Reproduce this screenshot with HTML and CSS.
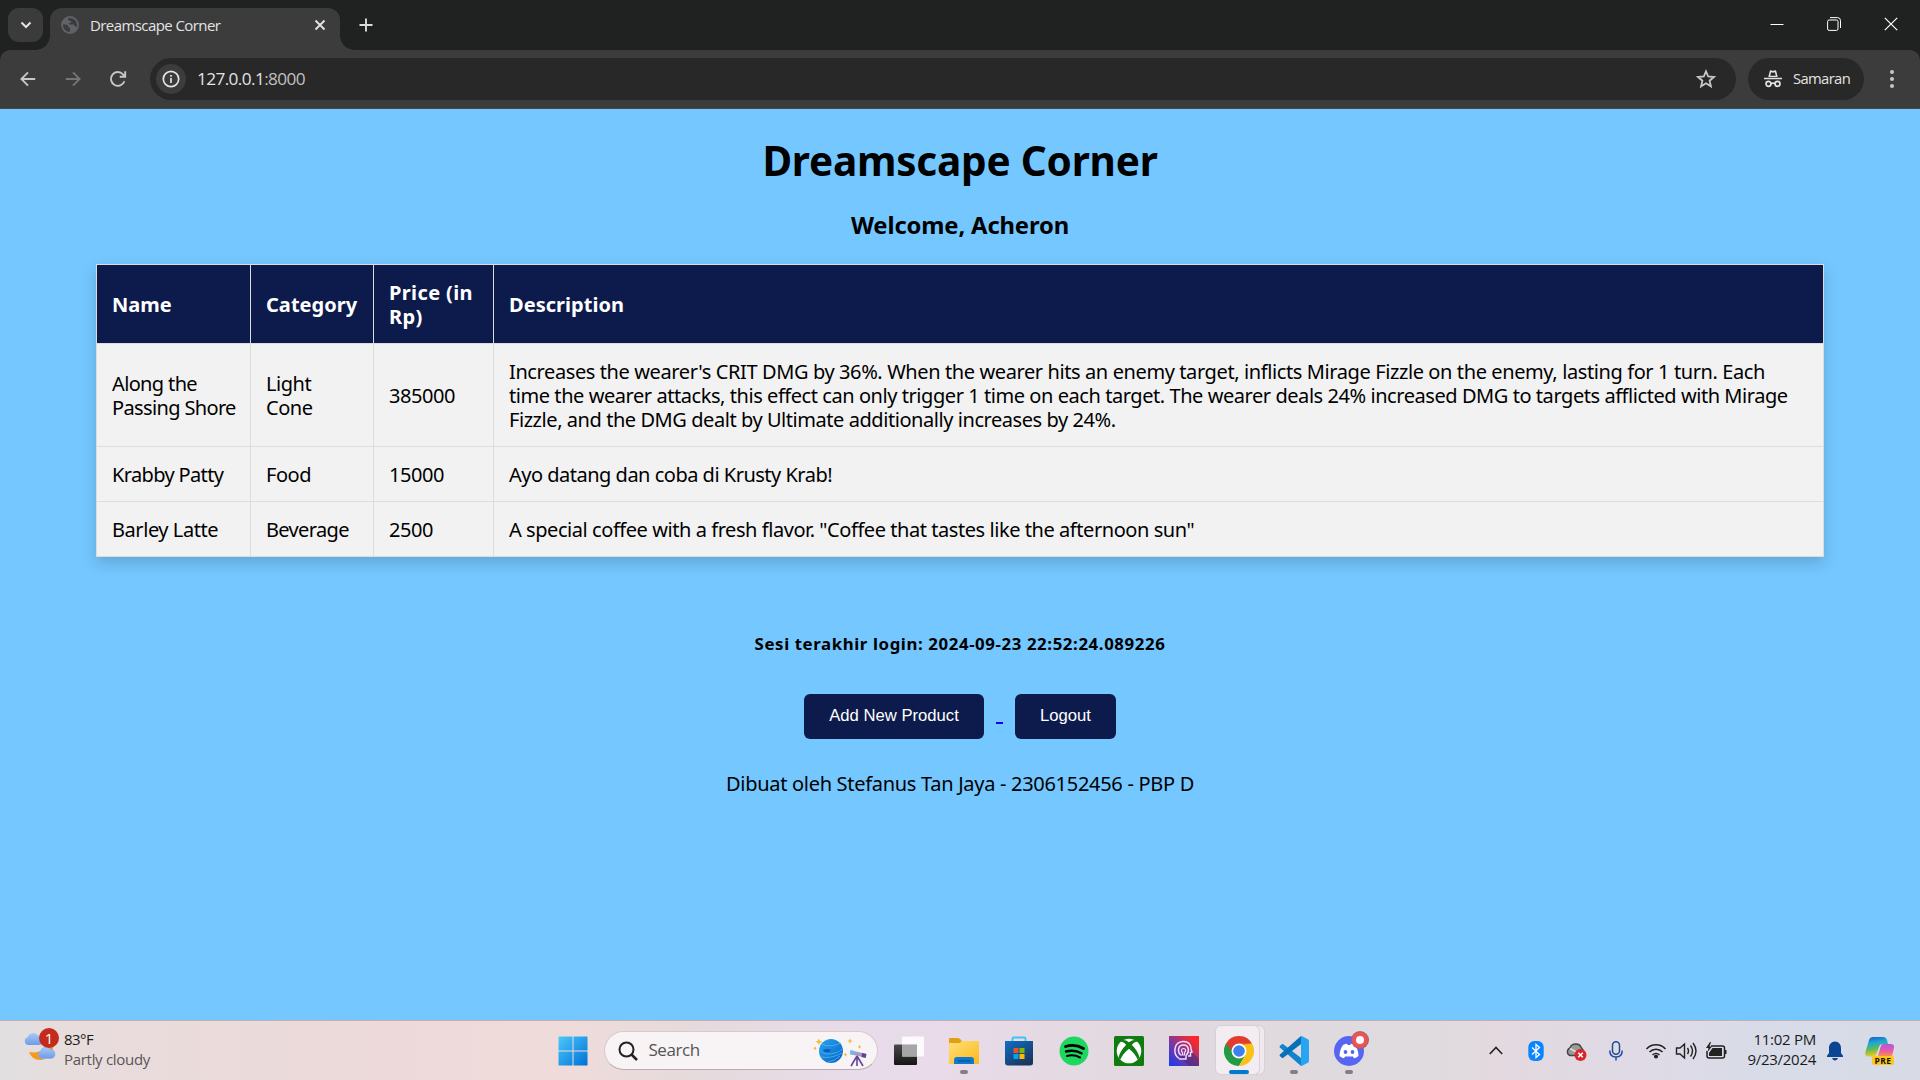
FILE: index.html
```html
<!DOCTYPE html>
<html lang="id">
<head>
<meta charset="utf-8">
<title>Dreamscape Corner</title>
<link rel="stylesheet" href="styles.css">
</head>
<body>
<header class="browser">
  <div class="tabstrip">
    <button class="tabsearch"><svg width="12" height="8" viewBox="0 0 12 8"><path d="M1.500 1.500 6 6l4.500-4.500" fill="none" stroke="#e3e3e3" stroke-width="2"/></svg></button>
    <div class="tab">
      <svg class="globe" width="18" height="18" viewBox="0 0 18 18"><circle cx="9" cy="9" r="8.900" fill="#5f6368"/><path d="M2 8.500c2.500.2 4.800 0 5 1.800.1 1.300 2 .8 2 2.200v3.300C5 16.200 1.800 12.600 2 8.500ZM7 2.200c0 2 .4 2.700 2.400 2.700 1.800 0 .5 2-.9 2.100-.8.100-.8 1.600.5 1.600h3.200c1.300 0 1.300 2.100 2.700 2.100h1C17 6 13 1 7 2.200Z" fill="#3c3c3c"/></svg>
      <span class="tabtitle">Dreamscape Corner</span>
      <svg class="tabclose" width="12" height="12" viewBox="0 0 12 12"><path d="m1.500 1.500 9 9m0-9-9 9" stroke="#e3e3e3" stroke-width="1.900"/></svg>
    </div>
    <svg class="newtab" width="14" height="14" viewBox="0 0 14 14"><path d="M7 .5v13M.5 7h13" stroke="#dcdcdc" stroke-width="1.900"/></svg>
    <div class="winctl">
      <svg width="14" height="14" viewBox="0 0 14 14"><path d="M.5 7.500h13" stroke="#fff"/></svg>
      <svg width="14" height="14" viewBox="0 0 14 14" fill="none" stroke="#fff"><rect x=".6" y="3" width="10.400" height="10.400" rx="1.500"/><path d="M3 .6h7.500a3 3 0 0 1 3 3V11"/></svg>
      <svg width="14" height="14" viewBox="0 0 14 14"><path d="m.8.800 12.400 12.400m0-12.400L.8 13.200" stroke="#fff" stroke-width="1.200"/></svg>
    </div>
  </div>
  <div class="toolbar">
    <div class="nav">
      <svg width="16" height="16" viewBox="0 0 16 16" fill="none" stroke="#c7c7c7" stroke-width="1.900"><path d="M15.200 8H1.500M8 1.300 1.400 8 8 14.700"/></svg>
      <svg width="16" height="16" viewBox="0 0 16 16" fill="none" stroke="#757575" stroke-width="1.900"><path d="M.8 8h13.700M8 1.300 14.600 8 8 14.700"/></svg>
      <svg width="18" height="18" viewBox="0 0 18 18" fill="none" stroke="#c7c7c7" stroke-width="1.900"><path d="M15.400 11.200A6.900 6.900 0 1 1 14 4.300l2 2M16.200 1.200v5.500h-5.500"/></svg>
    </div>
    <div class="omnibox">
      <span class="info"><svg width="18" height="18" viewBox="0 0 18 18"><circle cx="9" cy="9" r="7.700" fill="none" stroke="#e3e3e3" stroke-width="1.700"/><path d="M9 8v5M9 5v1.800" stroke="#e3e3e3" stroke-width="1.700"/></svg></span>
      <span class="url">127.0.0.1<i>:8000</i></span>
      <svg class="star" width="20" height="20" viewBox="0 0 20 20"><path d="m10 2.300 2.200 5.200 5.700.5-4.300 3.700 1.300 5.600-4.900-3-4.900 3 1.300-5.600L2.100 8l5.700-.5Z" fill="none" stroke="#c7c7c7" stroke-width="1.800"/></svg>
    </div>
    <div class="incog">
      <svg width="18" height="18" viewBox="0 0 18 18"><path d="M4.300 7 5.700 1.200C6 .1 6.900.3 7.600.6c1 .4 1.800.4 2.800 0 .7-.3 1.600-.5 1.900.6L13.700 7ZM0 7.800h18v1.500H0Z" fill="#e3e3e3"/><path d="m6.200 5.800.9-3.500c1.200.5 2.600.5 3.800 0l.9 3.500Z" fill="#282828"/><g fill="none" stroke="#e3e3e3" stroke-width="1.700"><circle cx="4.500" cy="13.800" r="2.500"/><circle cx="13.500" cy="13.800" r="2.500"/><path d="M7 13.600q2-1 4 0"/></g></svg>
      <span>Samaran</span>
    </div>
    <svg class="dots" width="6" height="20" viewBox="0 0 6 20" fill="#c7c7c7"><circle cx="3" cy="3" r="2"/><circle cx="3" cy="10" r="2"/><circle cx="3" cy="17" r="2"/></svg>
  </div>
</header>

<main class="page">
  <h1>Dreamscape Corner</h1>
  <h3>Welcome, Acheron</h3>
  <table>
    <colgroup><col class="c-name"><col class="c-cat"><col class="c-price"><col></colgroup>
    <tr><th>Name</th><th>Category</th><th class="wide">Price (in<br>Rp)</th><th>Description</th></tr>
    <tr><td class="tight">Along the<br>Passing Shore</td><td>Light<br>Cone</td><td>385000</td><td><span class="airy">Increases the wearer's CRIT DMG by 36%. When the wearer hits an enemy target, inflicts Mirage Fizzle on the enemy, lasting for 1 turn. Each</span><br>time the wearer attacks, this effect can only trigger 1 time on each target. The wearer deals 24% increased DMG to targets afflicted with Mirage<br>Fizzle, and the DMG dealt by Ultimate additionally increases by 24%.</td></tr>
    <tr><td class="tight">Krabby Patty</td><td>Food</td><td>15000</td><td class="snug">Ayo datang dan coba di Krusty Krab!</td></tr>
    <tr><td>Barley Latte</td><td class="tight">Beverage</td><td>2500</td><td>A special coffee with a fresh flavor. "Coffee that tastes like the afternoon sun"</td></tr>
  </table>
  <h5>Sesi terakhir login: 2024-09-23 22:52:24.089226</h5>
  <div class="actions">
    <button class="btn add">Add New Product</button>
    <a class="gap">&nbsp;</a>
    <button class="btn out">Logout</button>
  </div>
  <p class="credit">Dibuat oleh Stefanus Tan Jaya - 2306152456 - PBP D</p>
</main>

<footer class="taskbar">
  <div class="weather">
    <svg width="36" height="36" viewBox="0 0 36 36">
      <defs><linearGradient id="cl" x2="0" y2="1"><stop stop-color="#a9c8fb"/><stop offset="1" stop-color="#6f9be6"/></linearGradient></defs>
      <path d="M29 10c3 8-3 21-13 21-5 0-9-3-11-8 10 2 19-3 24-13Z" fill="#f59a1d"/>
      <path d="M5 17a4 4 0 0 1-.5-7.700A6 6 0 0 1 15 7.500c3 0 5 2 5 5s-2 4.500-4 4.500Z" transform="translate(-1 -1)" fill="url(#cl)"/>
      <path d="M18 31.500a4 4 0 0 1-.3-7.500 5.500 5.500 0 0 1 9.800-1.500c3 0 4.500 2 4.500 4.500s-1.800 4.500-4 4.500Z" transform="translate(-1 -2)" fill="url(#cl)" stroke="#86adf0" stroke-width=".6"/>
    </svg>
    <b class="count">1</b>
    <div><div class="temp">83°F</div><div class="cond">Partly cloudy</div></div>
  </div>
  <div class="apps">
    <span class="app"><svg width="30" height="30" viewBox="0 0 30 30"><defs><linearGradient id="w" x2="1" y2="1"><stop stop-color="#4cc9fb"/><stop offset="1" stop-color="#0070d6"/></linearGradient></defs><path d="M1 .5h13.500v14H.5V1Zm14.500 0h13.500l.5.5v13.500h-14ZM.5 15.500h14v14H1l-.5-.5Zm15 0h14V29l-.5.500H15.500Z" fill="url(#w)"/></svg></span>
    <div class="search">
      <svg width="20" height="20" viewBox="0 0 20 20" fill="none" stroke="#222"><circle cx="8.500" cy="8.500" r="7" stroke-width="2"/><path d="m13.500 13.500 5.500 5.500" stroke-width="2.500"/></svg>
      <span>Search</span>
      <svg class="scene" width="56" height="32" viewBox="0 0 56 32"><defs><linearGradient id="pl" x2="1" y2="1"><stop stop-color="#28a5f5"/><stop offset="1" stop-color="#0862be"/></linearGradient></defs><circle cx="19" cy="16" r="12" fill="url(#pl)"/><g fill="none" stroke="#4db4f2" stroke-width=".8"><path d="M9 9q10 4 20-1M7.500 14q3 6 11 5t12-5M9 22q10 2 21-4M16 27q7-1 12-6"/></g><ellipse cx="15" cy="15.500" rx="3.500" ry="1.500" fill="#0a5cb8"/><path d="M6.500 3.500 8 6l2.500.5L8 8l-1 2-1.500-2.500-2-1 2.500-.8ZM38 3.500l.8 1.800 1.800.7-1.800.8L38 9l-.8-2.200-1.700-.8 1.700-.7ZM3 11.500l1.500 2L3 15l-1.500-1.500ZM47.500 10l1.500 2-1.500 1.500L46 12ZM33.500 18l1.500 1.500-1.500 2-1.500-2Z" fill="#edbd3e"/><path d="m39 15.500 15 3.300-.5 3.800L38 19.200Z" fill="#a59bc3"/><path d="m38.500 15 4 1-.7 4-4-1Z" fill="#6bbcf4"/><path d="m50 18 4.500 1-.8 4-4.300-1Z" fill="#5d4592"/><path d="m45 21-6 10m6-10 6 10m-6-10v10" stroke="#66459b" stroke-width="1.600"/></svg>
    </div>
    <span class="app first"><svg width="30" height="30" viewBox="0 0 30 30"><defs><linearGradient id="tv" x2="0" y2="1"><stop stop-color="#4a4a4a"/><stop offset="1" stop-color="#151515"/></linearGradient></defs><rect y="8.500" width="23" height="20.500" rx="1" fill="url(#tv)"/><rect x="8" y=".5" width="22" height="20" rx="1" fill="#fff" opacity=".85"/><path d="M8 8.500h15v12H8Z" fill="#a6a6a6"/></svg></span>
    <span class="app run"><svg width="30" height="28" viewBox="0 0 30 28"><defs><linearGradient id="fo" x2="1" y2="1"><stop stop-color="#ffdf78"/><stop offset="1" stop-color="#fcb91b"/></linearGradient></defs><path d="M0 2q0-1 1-1h8q1 0 2 1l1.500 1.500V10H0Z" fill="#e0a010"/><path d="M0 6h10q1.200 0 2-1t2-1h15q1 0 1 1v22H0Z" fill="url(#fo)"/><path d="M5 27v-4q0-3 3-3h14q3 0 3 3v4Z" fill="#0f78d0"/><path d="M8.500 24h13" stroke="#0a4f91" stroke-width="1.200"/></svg></span>
    <span class="app"><svg width="30" height="30" viewBox="0 0 30 30"><defs><linearGradient id="st" x2=".7" y2="1"><stop stop-color="#0c70c8"/><stop offset="1" stop-color="#1b355b"/></linearGradient></defs><path d="M8.500 6V2.500q0-1 1-1h11q1 0 1 1V6" fill="none" stroke="#38c4f5" stroke-width="1.800"/><path d="M1 5h28v22q0 2.500-3 2.500H4Q1 29.500 1 26.500Z" fill="url(#st)"/><path d="M9.500 12h5v5h-5Z" fill="#f25022"/><path d="M15.500 12h5v5h-5Z" fill="#7fba00"/><path d="M9.500 18h5v5h-5Z" fill="#00a4ef"/><path d="M15.500 18h5v5h-5Z" fill="#ffb900"/></svg></span>
    <span class="app"><svg width="30" height="30" viewBox="0 0 30 30"><circle cx="15" cy="15" r="14.500" fill="#1ed760"/><g fill="none" stroke="#000" stroke-linecap="round"><path d="M6.500 10.500q9.500-3 18 2" stroke-width="2.800"/><path d="M7 15.500q8.500-2.200 15.500 1.800" stroke-width="2.400"/><path d="M8 20q7-1.800 13 1.500" stroke-width="2"/></g></svg></span>
    <span class="app"><svg width="30" height="30" viewBox="0 0 30 30"><rect width="30" height="30" rx="1.500" fill="#107c10"/><circle cx="15" cy="15" r="12.300" fill="#fff"/><path d="M7.500 4.500q3-1.500 7.500 1.800 4.500-3.300 7.500-1.800l.5 1.200q-2.500-.2-5.200 3Q24 15 25.500 21.500l-1.800 2.200Q21 17.500 15 12.800 9 17.500 6.300 23.700L4.500 21.500Q6 15 12.200 8.700 9.500 5.500 7 5.700Z" fill="#107c10"/></svg></span>
    <span class="app"><svg width="30" height="30" viewBox="0 0 30 30"><defs><linearGradient id="ar" y1="1" x2="1" y2="0"><stop stop-color="#123df5"/><stop offset=".5" stop-color="#8d378f"/><stop offset=".85" stop-color="#fc2828"/></linearGradient></defs><rect width="30" height="30" fill="url(#ar)"/><path d="M10 20 20 30h10V23l-7-7Z" fill="#35256d" opacity=".45"/><g fill="none" stroke="#f1ddff" stroke-width="1.500"><path d="M10 22.500c-6-4-6-16.500 4-17C20.500 5.200 22 10 22 13l1 3-1.500.5v3.500h-2.500"/><path d="M12.500 19.500c-4.500-3-4-10.500 2-10.500s6 7.500 2.500 10.500v3.500H10"/><path d="M13.500 19v-2.500c-2-1.500-1-4 1-4s3 2.500 1 4V19Z" stroke-width="1.200"/></g></svg></span>
    <span class="app active"><svg width="30" height="30" viewBox="0 0 30 30"><path d="M15 15 2 7.500A15 15 0 0 1 28 7.500Z" fill="#e33b2e"/><path d="M2 7.500A15 15 0 0 0 15 30l6.500-11.200L15 15Z" fill="#229a46"/><path d="M28 7.500A15 15 0 0 1 15 30l6.500-11.200L15 7.500Z" fill="#fbc116"/><path d="M2 7.500h26L15 9 9 16Z" fill="#e33b2e"/><circle cx="15" cy="15" r="7.500" fill="#fff"/><circle cx="15" cy="15" r="5.800" fill="#3c82ee"/></svg></span>
    <span class="app run"><svg width="30" height="30" viewBox="0 0 30 30"><path d="m.8 10 2-1.700q.8-.5 1.500 0L24 23.500v5L22 30 .9 11.500Q.2 10.800.8 10Z" fill="#1283ce"/><path d="m.8 20 2 1.700q.8.500 1.500 0L24 6.500v-5L22 0 .9 18.500q-.7.700-.1 1.500Z" fill="#0870b8"/><path d="M22 0q1 0 6.500 3 1.500.8 1.500 2v20q0 1.200-1.500 2Q23 30 22 30q0-1 0-2V2Z" fill="#25a5f2"/></svg></span>
    <span class="app run"><svg class="discord" width="38" height="38" viewBox="0 0 38 38"><circle cx="19" cy="19" r="15" fill="#5865f2"/><path d="M13 13q2.500-1.200 4-1.200l.7 1.200h2.600l.7-1.200q1.500 0 4 1.200 3.500 5 3.500 11-2 1.800-4.500 2.300L23 24.500h-8L14 26.300q-2.500-.5-4.500-2.300 0-6 3.500-11Z" fill="#fff"/><circle cx="15.500" cy="20" r="1.900" fill="#5865f2"/><circle cx="22.500" cy="20" r="1.900" fill="#5865f2"/><circle cx="30" cy="8" r="9" fill="#8b6a75"/><circle cx="30" cy="8" r="8" fill="#f05156"/><circle cx="30" cy="8" r="4" fill="#fff"/></svg></span>
  </div>
  <div class="tray">
    <span class="ti"><svg width="14" height="9" viewBox="0 0 14 9"><path d="M.8 8 7 1.500 13.200 8" fill="none" stroke="#222" stroke-width="1.600"/></svg></span>
    <span class="ti"><svg width="16" height="20" viewBox="0 0 16 20"><rect x=".3" width="15.400" height="20" rx="6" fill="#0a84ff"/><path d="m4 6.500 7.500 7L8 16.500v-13l3.500 3-7.500 7" fill="none" stroke="#fff" stroke-width="1.300"/></svg></span>
    <span class="ti"><svg width="22" height="20" viewBox="0 0 22 20"><path d="M5 14.500a4 4 0 0 1 0-7.500q1-4 6-4 4 0 5.500 4L18 9v5.500Z" fill="#9b9b9b" stroke="#444" stroke-width="1.400"/><path d="m5 7.500 9 5" stroke="#ddd" stroke-width="1.500"/><circle cx="15.500" cy="14" r="6" fill="#d9252d"/><path d="m13.200 11.700 4.600 4.600m0-4.600-4.600 4.600" stroke="#fff" stroke-width="1.600"/></svg></span>
    <span class="ti"><svg width="14" height="20" viewBox="0 0 14 20" fill="none" stroke="#1c4e9c" stroke-width="1.500"><rect x="3.500" y=".8" width="7" height="12.400" rx="3.500"/><path d="M.8 9.500q0 6.500 6.200 6.500t6.200-6.500M7 16v3.500"/></svg></span>
    <span class="ti s"><svg width="22" height="16" viewBox="0 0 22 16" fill="none" stroke="#222" stroke-width="1.500"><path d="M1.500 6a13 13 0 0 1 19 0M4.500 9a9 9 0 0 1 13 0M7.500 12a5 5 0 0 1 7 0"/><circle cx="11" cy="13.500" r="1.300" fill="#222"/></svg></span>
    <span class="ti"><svg width="22" height="18" viewBox="0 0 22 18" fill="none" stroke="#222" stroke-width="1.400"><path d="M1.500 6H5l4.500-4v14L5 12H1.500ZM12.500 6q2 3 0 6M15.500 3.500q4 5.500 0 11M18 1q6 8 0 16"/></svg></span>
    <span class="ti"><svg width="22" height="18" viewBox="0 0 22 18"><path d="M6 4h11.500q2 0 2 2v8q0 2-2 2H4q-2 0-2-2V9" fill="none" stroke="#222" stroke-width="1.500"/><path d="M7.500 6H17v8H4v-3Z" fill="#222"/><path d="M20 8h1.500v4H20ZM5 0 1 6h2.500L2.500 10 7 4.500H4.500L6 0Z" fill="#222"/></svg></span>
    <div class="clock"><div>11:02 PM</div><div>9/23/2024</div></div>
    <span class="ti bell"><svg width="16" height="20" viewBox="0 0 16 20" fill="#094591"><path d="M8 .5c3.800 0 6 3 6 6.500v5l2 2.800v1.200H0v-1.200L2 12V7C2 3.500 4.200.5 8 .5ZM5 17h6q-1 2.500-3 2.500T5 17Z"/></svg></span>
    <span class="ti pilot"><svg width="30" height="30" viewBox="0 0 30 30"><defs><linearGradient id="p1" x2=".2" y2="1"><stop stop-color="#1557c5"/><stop offset=".35" stop-color="#1ea6d8"/><stop offset=".65" stop-color="#59bd55"/><stop offset="1" stop-color="#f4c728"/></linearGradient><linearGradient id="p2" x2="0" y2="1"><stop stop-color="#a95be9"/><stop offset=".6" stop-color="#ee5b9c"/><stop offset="1" stop-color="#f9934c"/></linearGradient></defs><path d="M8 1h10q3 0 4 3l1 4h-5q-3 0-4 3l-2.500 7q-1 2.500-3.500 2.500H3Q-.5 20.500.5 16L4 4q1-3 4-3Z" fill="url(#p1)"/><path d="M18 8h8q3.500 0 3 4l-2 8H13l2.500-9Q16.500 8 18 8Z" fill="url(#p2)"/></svg><b>PRE</b></span>
  </div>
</footer>
</body>
</html>
```
FILE: styles.css
```css
* { box-sizing: border-box; }
body { margin: 0; width: 1920px; height: 1080px; display: flex; flex-direction: column; overflow: hidden; background: #74c7ff; font-family: "Noto Sans", "Open Sans", sans-serif; }
svg { display: block; flex: none; }
button { border: 0; padding: 0; }

.browser { height: 109px; flex: none; background: #202221; color: #e3e3e3; font-family: "Open Sans", sans-serif; white-space: nowrap; }
.tabstrip { height: 50px; display: flex; align-items: flex-start; padding: 8px 0 0 8px; }
.tabsearch { width: 35px; height: 34px; border-radius: 11px; background: #3a3b3a; display: grid; place-items: center; }
.tab { position: relative; width: 290px; height: 42px; margin-left: 7px; background: #3c3c3c; border-radius: 12px 12px 0 0; display: flex; align-items: center; padding: 0 14px 8px 11px; }
.tab::before, .tab::after { content: ""; position: absolute; bottom: 0; width: 14px; height: 14px; }
.tab::before { left: -14px; background: radial-gradient(circle at 0 0, transparent 13.5px, #3c3c3c 14px); }
.tab::after { right: -14px; background: radial-gradient(circle at 100% 0, transparent 13.5px, #3c3c3c 14px); }
.tabtitle { flex: 1; margin-left: 11px; font-size: 15px; line-height: 20px; letter-spacing: -.58px; }
.newtab { margin: 10px 0 0 19px; }
.winctl { margin-left: auto; display: flex; gap: 43px; padding: 9px 22px 0 0; }
.toolbar { height: 59px; background: #3c3c3c; border-radius: 10px 10px 0 0; border-bottom: 1px solid #474747; display: flex; align-items: center; padding: 0 25px 0 20px; }
.nav { display: flex; align-items: center; gap: 28.500px; width: 130px; }
.omnibox { width: 1586px; height: 42px; border-radius: 21px; background: #282828; display: flex; align-items: center; padding: 0 20px 0 6px; }
.info { width: 30px; height: 30px; border-radius: 50%; background: #3c3c3c; display: grid; place-items: center; }
.url { flex: 1; margin-left: 11px; font-size: 17.200px; line-height: 24px; letter-spacing: -.6px; }
.url i { font-style: normal; color: #c0c0c0; }
.incog { width: 116px; height: 42px; border-radius: 21px; background: #282828; margin-left: 12px; display: flex; align-items: center; padding-left: 15.500px; gap: 11.500px; font-size: 14.800px; line-height: 20px; letter-spacing: -.65px; }
.incog span { margin-top: -2px; }
.dots { margin-left: auto; }

.page { flex: 1; padding-top: 28px; text-align: center; color: #000; }
h1, h3, h5, p { margin: 0; }
h1 { font-size: 40.500px; line-height: 48px; letter-spacing: -.21px; }
h3 { font-size: 23.800px; line-height: 28px; margin-top: 26px; letter-spacing: -.14px; }
table { width: 1728px; margin: 25px auto 0; border-collapse: collapse; table-layout: fixed; background: #f2f2f2; box-shadow: 0 6px 14px rgba(0, 0, 0, .17); text-align: left; font-size: 20px; line-height: 24px; letter-spacing: -.44px; }
th, td { border: 1px solid #ddd; padding: 16px 15px 14px; height: 55px; white-space: nowrap; }
th { background: #0d1b4c; color: #fff; height: 79px; letter-spacing: .03px; }
.wide { letter-spacing: .38px; }
.tight { letter-spacing: -.64px; }
.snug { letter-spacing: -.5px; }
.airy { letter-spacing: -.395px; }
.c-name { width: 154px; }
.c-cat { width: 123px; }
.c-price { width: 120px; }
h5 { font-size: 16.800px; line-height: 20px; margin-top: 77px; letter-spacing: .61px; }
.actions { display: flex; justify-content: center; margin-top: 40px; height: 45px; }
.btn { height: 45px; border-radius: 6px; background: #0d1b4c; color: #fff; font: 16.670px "Liberation Sans", sans-serif; padding-bottom: 2px; }
.add { width: 180px; }
.out { width: 101px; }
.gap { width: 7px; margin: 0 12px; border-bottom: 2px solid #00e; height: 30px; overflow: hidden; }
.credit { font-size: 20px; line-height: 24px; margin-top: 33px; letter-spacing: -.295px; }

.taskbar { height: 60px; flex: none; display: flex; border-top: 1px solid #bfaeb5; color: #1b1b1b; font-family: "Open Sans", sans-serif; background: linear-gradient(90deg, #e1dfe0 0, #e9dcdc 90px, #edd9da 390px, #efdcda 560px, #e5dadc 700px, #e8dcea 860px, #e9dbe9 940px, #e1d9df 1150px, #dfdbdf 1420px, #e3d9df 1500px, #dfdae6 1640px, #d7dce8 1780px, #d8dbe6 1920px); }
.weather { position: relative; width: 545px; display: flex; padding: 8px 0 0 24px; gap: 4px; }
.weather div { font-size: 15px; line-height: 20px; letter-spacing: -.3px; }
.weather .temp { letter-spacing: -.55px; }
.cond { color: #5a5558; }
.count { position: absolute; left: 39px; top: 7px; width: 20px; height: 20px; border-radius: 50%; background: #c42b1c; color: #fff; font: 15px/20px "Open Sans", sans-serif; text-align: center; }
.apps { display: flex; }
.app { position: relative; width: 55px; height: 59px; display: grid; place-items: center; }
.app svg { position: relative; }
.app .discord { margin: -4px; overflow: visible; }
.app.first { margin-left: 4px; }
.app.run::after, .app.active::after { content: ""; position: absolute; top: 49px; left: 23.500px; width: 8px; height: 4px; border-radius: 2px; background: #857d83; }
.app.active::before { content: ""; position: absolute; left: 4px; top: 5px; width: 43px; height: 48px; border-radius: 5px; background: #f3edf2; box-shadow: 0 0 0 1px #d9d0d7, 5px 0 0 #efe8ee, 5px 0 0 1px #d9d0d7; }
.app.active::after { left: 17.500px; width: 20px; background: #0078d4; }
.search { width: 274px; height: 39px; margin: 10px 0 0 3.500px; border-radius: 20px; background: #f8f3f5; border: 1px solid #d9c9d0; border-bottom-color: #b9acb4; display: flex; align-items: center; padding-left: 13px; gap: 11px; font-size: 17px; line-height: 24px; letter-spacing: -.45px; color: #555; }
.search span { margin-top: -1px; }
.scene { margin-left: auto; margin-right: 9px; }
.tray { display: flex; align-items: center; margin-left: auto; padding-right: 20px; }
.ti { width: 40px; display: grid; place-items: center; }
.ti.s { margin-left: 5px; }
.ti.s, .ti.s ~ .ti { width: 30px; }
.clock { width: 85px; text-align: right; font-size: 15px; line-height: 20px; letter-spacing: -.27px; padding-bottom: 3px; }
.ti.bell { margin-left: 4px; }
.tray .ti.pilot { position: relative; width: 40px; margin-left: 10px; }
.pilot b { position: absolute; left: 12px; bottom: 1px; width: 22px; height: 9px; border-radius: 2px; background: #fdc817; color: #111; font: 700 8.500px/9px "Open Sans", sans-serif; text-align: center; letter-spacing: .5px; }
```
